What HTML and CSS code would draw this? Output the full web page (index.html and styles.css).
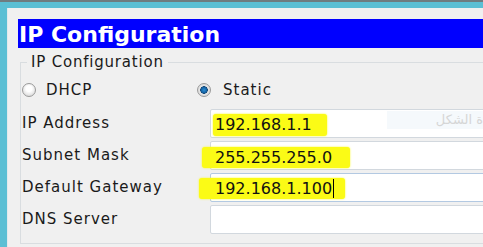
FILE: index.html
```html
<!DOCTYPE html>
<html lang="en">
<head>
    <meta charset="UTF-8">
    <title>IP Configuration</title>
    <link rel="stylesheet" href="styles.css">
</head>
<body>
    <div class="window">
        <div class="frame">
            <div class="panel">
                <h1 class="title">IP Configuration</h1>

                <fieldset class="group">
                    <legend>IP Configuration</legend>

                    <div class="mode-row">
                        <label class="radio"><span class="dot"></span>DHCP</label>
                        <label class="radio static"><span class="dot on"></span>Static</label>
                    </div>

                    <div class="fields">
                        <span class="label">IP Address</span>
                        <div class="box">
                            <span class="mark mark-ip">192.168.1.1</span>
                            <span class="ghost" dir="rtl">ة الشكل</span>
                        </div>

                        <span class="label">Subnet Mask</span>
                        <div class="box">
                            <span class="mark mark-mask">255.255.255.0</span>
                        </div>

                        <span class="label">Default Gateway</span>
                        <div class="box focus">
                            <span class="mark mark-gw">192.168.1.100<span class="caret"></span></span>
                        </div>

                        <span class="label">DNS Server</span>
                        <div class="box"></div>
                    </div>
                </fieldset>
            </div>
        </div>
    </div>
</body>
</html>
```

FILE: styles.css
```css
* {
    box-sizing: border-box;
}

body {
    margin: 0;
    width: 483px;
    height: 247px;
    overflow: hidden;
    background-color: #f0f0f0;
    font-family: 'DejaVu Sans', sans-serif;
}

.window {
    border-top: 2px solid #6f7c80;
    height: 247px;
}

.frame {
    border-top: 6px solid #5bbfd4;
    border-left: 7px solid #5bbfd4;
    height: 245px;
}

.panel {
    border-left: 1px solid #e2eaec;
    height: 100%;
    background-color: #f0f0f0;
    overflow: hidden;
}

.title {
    margin: 11px 0 0 10px;
    height: 29px;
    padding: 3px 0 0 1px;
    line-height: 26px;
    font-size: 22px;
    font-weight: bold;
    color: #fff;
    background-color: #0000ff;
    white-space: nowrap;
}

.group {
    margin: 5px 0 0 12px;
    padding: 0 0 9px 0;
    width: 600px;
    border: 1px solid #d9dde0;
    min-width: 0;
}

.group legend {
    margin-left: 6px;
    padding: 0 4px;
    font-size: 15px;
    line-height: 18px;
    letter-spacing: 0.8px;
    color: #1a1a1a;
}

/* radio buttons */
.mode-row {
    display: grid;
    grid-template-columns: 176px 1fr;
    margin-top: 8px;
    height: 22px;
}

.radio {
    display: flex;
    align-items: center;
    font-size: 15px;
    line-height: 22px;
    letter-spacing: 1px;
    color: #1a1a1a;
}

.dot {
    width: 14px;
    height: 14px;
    margin: 0 10px 0 1px;
    border-radius: 50%;
    border: 1px solid #9a9a9a;
    background: radial-gradient(circle at 50% 40%, #ffffff 30%, #dedede 75%, #c8c8c8 100%);
}

.static .dot {
    margin: 0 12px 0 0;
}

.dot.on {
    background: radial-gradient(circle, #2b8fd6 0, #135d9c 3px, #0d3f6e 3.5px, #e6e6e6 4px, #d0d0d0 100%);
}

/* address fields */
.fields {
    display: grid;
    grid-template-columns: 189px 1fr;
    grid-auto-rows: 29px;
    row-gap: 3px;
    margin-top: 8px;
}

.label {
    padding-left: 1px;
    font-size: 15px;
    line-height: 29px;
    letter-spacing: 1px;
    color: #1a1a1a;
    white-space: nowrap;
}

.box {
    position: relative;
    padding: 4px 0 0 4px;
    background-color: #fff;
    border: 1px solid #d2d8de;
    border-radius: 2px;
    white-space: nowrap;
}

.box.focus {
    border-color: #b3c9e2;
}

.mark {
    position: relative;
    z-index: 1;
    display: inline-block;
    height: 22px;
    line-height: 22px;
    font-size: 16px;
    color: #111;
    background-color: #fbfb16;
    border-radius: 3px;
    box-shadow: 0 0 2px #fbfb16;
}

.mark-ip {
    margin-left: -2px;
    padding: 0 15px 0 2px;
}

.mark-mask {
    margin-left: -13px;
    padding: 0 18px 0 13px;
    top: 1px;
    height: 21px;
}

.mark-gw {
    margin-left: -16px;
    padding: 0 11px 0 16px;
    height: 21px;
}

.caret {
    display: inline-block;
    width: 1px;
    height: 19px;
    margin-left: 1px;
    vertical-align: -4px;
    background-color: #000;
}

.ghost {
    position: absolute;
    left: 176px;
    top: 1px;
    width: 140px;
    height: 18px;
    padding-right: 44px;
    font-size: 13px;
    line-height: 18px;
    color: #d6d6d6;
    background-color: #f5f9fc;
}
```
